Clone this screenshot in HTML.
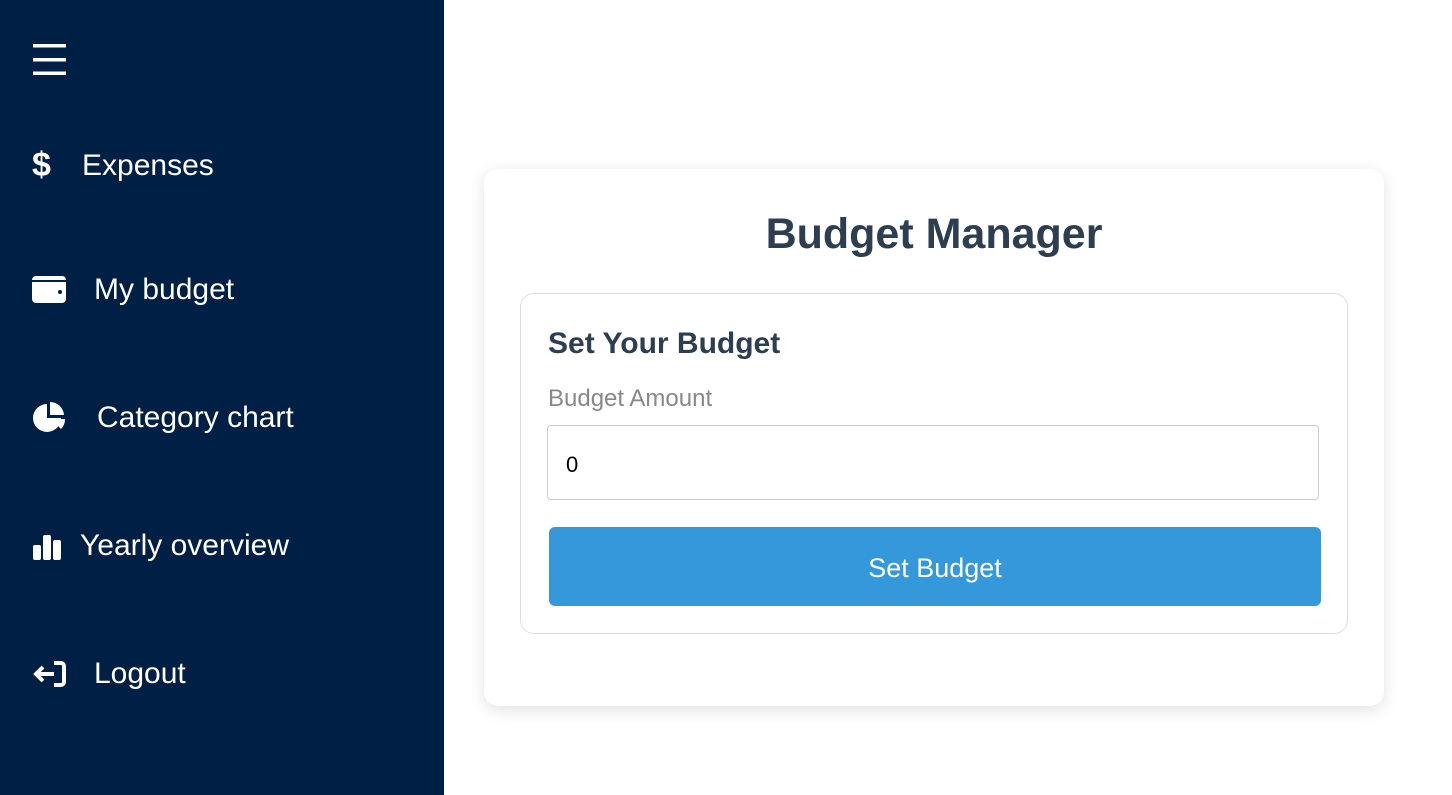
<!DOCTYPE html>
<html><head><style>
*{margin:0;padding:0;box-sizing:border-box}
body{width:1452px;height:795px;font-family:"Liberation Sans",sans-serif;background:#fff;position:relative;overflow:hidden}
.side{position:absolute;left:0;top:0;width:444px;height:795px;background:#001f45;color:#fff}
.nav{position:absolute;left:32px;font-size:30px;display:flex;align-items:center}
.nav svg{fill:#fff}
.card{position:absolute;left:484px;top:169px;width:900px;height:537px;background:#fff;border-radius:14px;box-shadow:0 4px 16px rgba(0,0,0,.12)}
h1{position:absolute;top:41px;width:100%;text-align:center;font-size:43px;color:#2c3e50;font-weight:bold}
.inner{position:absolute;left:36px;top:124px;width:828px;height:341px;border:1px solid #ddd;border-radius:14px}
h2{position:absolute;left:27px;top:33px;font-size:30px;color:#2c3e50;font-weight:bold}
.lab{position:absolute;left:27px;top:91px;font-size:24px;color:#888}
.inp{position:absolute;left:26px;top:131px;width:772px;height:75px;border:1px solid #ccc;border-radius:4px;font-size:22px;padding:26px 18px;color:#000}
.btn{position:absolute;left:28px;top:233px;width:772px;height:79px;background:#3498db;border-radius:6px;color:#fff;font-size:27px;text-align:center;line-height:82px}
</style></head><body>
<div class="side">
<svg style="position:absolute;left:33px;top:43px" width="33" height="33"><rect y="1" width="33" height="3.5" fill="#fff"/><rect y="15" width="33" height="3.5" fill="#fff"/><rect y="28.5" width="33" height="3.5" fill="#fff"/></svg>
<div class="nav" style="top:146px"><span style="font-weight:bold;font-size:34px;width:50px">$</span>Expenses</div>
<div class="nav" style="top:273px"><svg width="34" height="28" style="margin-right:28px"><rect x="0" y="0" width="34" height="27" rx="4"/><rect x="0" y="4" width="34" height="2" fill="#001f45"/><circle cx="28" cy="16" r="2" fill="#001f45"/></svg>My budget</div>
<div class="nav" style="top:401px"><svg width="36" height="34" style="margin-right:29px"><path d="M15 3A14 14 0 1 0 29 17H15Z"/><path d="M18 1A14 14 0 0 1 32 14H18Z"/><path d="M19 18H33A14 14 0 0 1 29 28Z"/></svg>Category chart</div>
<div class="nav" style="top:529px"><svg width="30" height="28" style="margin-right:18px"><rect x="1" y="13" width="8" height="15" rx="2"/><rect x="11" y="3" width="8" height="25" rx="2"/><rect x="21" y="8" width="8" height="20" rx="2"/></svg>Yearly overview</div>
<div class="nav" style="top:657px"><svg width="36" height="30" style="margin-right:26px"><path d="M22 4h7a3 3 0 0 1 3 3v16a3 3 0 0 1-3 3h-7" stroke="#fff" stroke-width="4" fill="none"/><path d="M4 15h18M11 8l-7 7 7 7" stroke="#fff" stroke-width="4" fill="none"/></svg>Logout</div>
</div>
<div class="card">
<h1>Budget Manager</h1>
<div class="inner">
<h2>Set Your Budget</h2>
<div class="lab">Budget Amount</div>
<div class="inp">0</div>
<div class="btn">Set Budget</div>
</div>
</div>
</body></html>
